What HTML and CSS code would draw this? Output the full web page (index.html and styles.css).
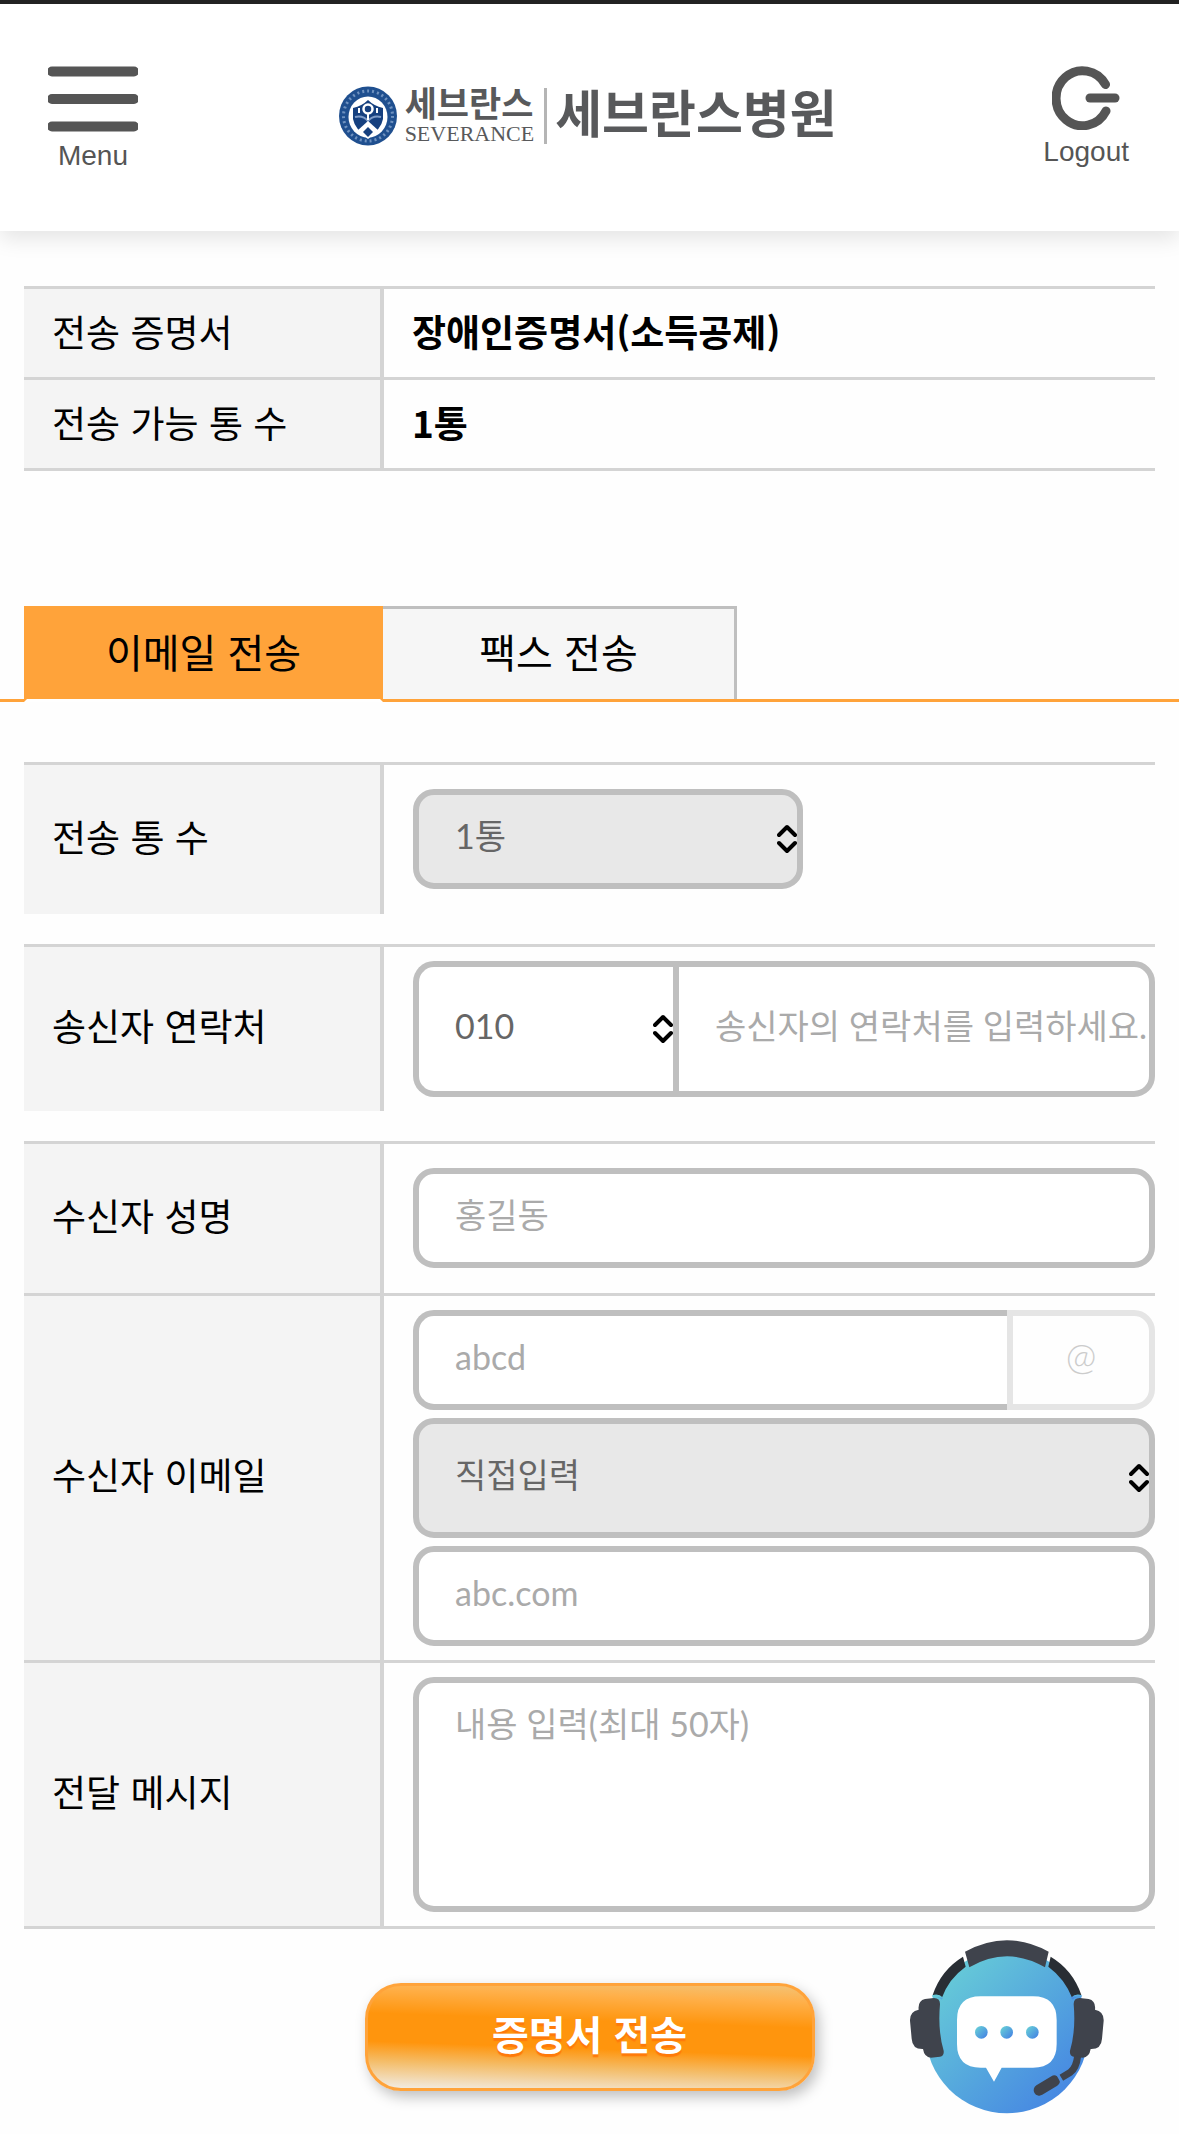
FILE: index.html
```html
<!DOCTYPE html>
<html lang="ko">
  <head>
    <meta charset="utf-8">
    <title>세브란스병원 증명서 전송</title>
    <meta name="viewport" content="width=device-width, initial-scale=1">
    <link rel="stylesheet" href="styles.css">
  </head>
  <body>
    <header class="header">
      <button type="button" class="header-btn">
        <svg width="90" height="66" viewBox="0 0 90 66">
          <path d="M4 5.5H86M4 33H86M4 60.5H86" stroke="#555" stroke-width="10" stroke-linecap="round"/>
        </svg>
        <span>Menu</span>
      </button>

      <a href="#" class="logo">
        <svg class="emblem" width="58" height="60" viewBox="0 0 58 60">
          <ellipse cx="29" cy="30" rx="29" ry="29.5" fill="#1f4f8f"/>
          <ellipse cx="29" cy="30" rx="24.5" ry="25" fill="none" stroke="#6f92c0" stroke-width="3" stroke-dasharray="2 3"/>
          <ellipse cx="29" cy="31" rx="19.5" ry="20.5" fill="#fff"/>
          <path d="M14 22Q23 20 29 14Q35 20 44 22V33Q42 44 29 51Q16 44 14 33Z" fill="#16407f"/>
          <path d="M16 31Q24 29 29 35Q34 29 42 31" fill="none" stroke="#7f9cc8" stroke-width="2"/>
          <path d="M18 45L29 35L40 45L29 53Z" fill="#fff"/>
          <path d="M29 41L34 46L29 51L24 46Z" fill="#16407f"/>
          <circle cx="29" cy="23" r="4.5" fill="#16407f" stroke="#fff" stroke-width="2.5"/>
          <path d="M29 28V34M20 22V27M38 22V27" stroke="#fff" stroke-width="2"/>
        </svg>
        <span class="logo-brand">
          <span class="logo-ko">세브란스</span>
          <span class="logo-en">SEVERANCE</span>
        </span>
        <span class="logo-name">세브란스병원</span>
      </a>

      <button type="button" class="header-btn logout">
        <svg width="68" height="64" viewBox="0 0 68 64">
          <path d="M53.5 18.5A26.5 27.5 0 1 0 54 45" fill="none" stroke="#555" stroke-width="9" stroke-linecap="round"/>
          <path d="M38 32H63" stroke="#555" stroke-width="9" stroke-linecap="round"/>
        </svg>
        <span>Logout</span>
      </button>
    </header>

    <table class="info">
      <tr>
        <th>전송 증명서</th>
        <td>장애인증명서(소득공제)</td>
      </tr>
      <tr>
        <th>전송 가능 통 수</th>
        <td>1통</td>
      </tr>
    </table>

    <nav class="tabs">
      <a href="#" class="tab active">이메일 전송</a>
      <a href="#" class="tab">팩스 전송</a>
    </nav>

    <form class="form">
      <div class="row spaced">
        <label for="copies">전송 통 수</label>
        <div class="fields tall">
          <select id="copies" class="field short" disabled>
            <option>1통</option>
          </select>
        </div>
      </div>

      <div class="row spaced">
        <label for="phone">송신자 연락처</label>
        <div class="fields joined">
          <select class="field phone-code" aria-label="국번">
            <option>010</option>
            <option>011</option>
            <option>016</option>
          </select>
          <input id="phone" class="field phone-number" type="tel" placeholder="송신자의 연락처를 입력하세요.">
        </div>
      </div>

      <div class="row">
        <label for="receiver">수신자 성명</label>
        <div class="fields tall">
          <input id="receiver" class="field" type="text" placeholder="홍길동">
        </div>
      </div>

      <div class="row">
        <label for="email">수신자 이메일</label>
        <div class="fields">
          <div class="joined">
            <input id="email" class="field email-id" type="text" placeholder="abcd">
            <span class="at">@</span>
          </div>
          <select class="field domain" aria-label="이메일 도메인" disabled>
            <option>직접입력</option>
          </select>
          <input class="field" type="text" aria-label="도메인 입력" placeholder="abc.com">
        </div>
      </div>

      <div class="row last">
        <label for="message">전달 메시지</label>
        <div class="fields">
          <textarea id="message" class="field" maxlength="50" placeholder="내용 입력(최대 50자)"></textarea>
        </div>
      </div>

      <button type="submit" class="submit">증명서 전송</button>
    </form>

    <a href="#" class="chatbot" aria-label="상담">
      <svg width="195" height="175" viewBox="88 85 585 525">
        <defs>
          <linearGradient id="chat" x1="0.15" y1="0.15" x2="0.85" y2="0.85">
            <stop offset="0" stop-color="#65c9d8"/>
            <stop offset="1" stop-color="#4789e2"/>
          </linearGradient>
        </defs>
        <circle cx="382" cy="363" r="245" fill="url(#chat)"/>
        <!-- headband -->
        <path d="M244 130L254 146L264 142L262 120ZM520 130L510 146L500 142L502 120Z" fill="#fff"/>
        <path d="M256 123Q382 54 507 123L496 170Q382 104 269 170Z" fill="#3f434c"/>
        <path d="M250 138Q184 178 159 253L186 263Q206 205 258 168ZM513 138Q580 178 605 253L578 263Q556 205 506 168Z" fill="#292e34"/>
        <path d="M158 258Q174 250 188 264M576 264Q590 250 606 258" fill="none" stroke="url(#chat)" stroke-width="7"/>
        <!-- ear cups -->
        <path id="cup" d="M136 265L163 262Q181 262 181 280Q174 360 192 420Q194 436 181 438L154 441Q134 440 130 415Q98 416 96 384L91 330Q90 302 117 297Q114 270 136 265Z" fill="#3f434c"/>
        <use href="#cup" transform="translate(763 0) scale(-1 1)"/>
        <!-- microphone -->
        <path d="M594 436Q590 471 572 485L545 501" fill="none" stroke="#3f434c" stroke-width="21"/>
        <path d="M479 538L524 511" stroke="#3f434c" stroke-width="34" stroke-linecap="round"/>
        <path d="M532 489L549 520" stroke="#4b8de1" stroke-width="7"/>
        <!-- speech bubble -->
        <path d="M303 257H460Q531 257 531 328V400Q531 471 460 471H366L343 513L319 471H303Q232 471 232 400V328Q232 257 303 257Z" fill="#fff"/>
        <circle cx="305" cy="365" r="19" fill="url(#chat)"/>
        <circle cx="381" cy="365" r="19" fill="url(#chat)"/>
        <circle cx="458" cy="365" r="19" fill="url(#chat)"/>
      </svg>
    </a>
  </body>
</html>
```
FILE: styles.css
```css
* {
    box-sizing: border-box;
}

body {
    position: relative;
    margin: 0;
    border-top: 4px solid #222;
    background-color: #fefefe;
    color: #000;
    font-family: "Noto Sans CJK KR", sans-serif;
    font-size: 37px;
}

a {
    color: inherit;
    text-decoration: none;
}

/* header */
.header {
    display: flex;
    justify-content: space-between;
    align-items: flex-start;
    padding: 62px 50px 57px 48px;
    background-color: #fff;
    box-shadow: 0 8px 20px rgba(0, 0, 0, 0.1);
}

.header-btn {
    display: flex;
    flex-direction: column;
    align-items: center;
    gap: 6px;
    padding: 0;
    border: 0;
    background: none;
    color: #555;
    font-family: "Liberation Sans", Arial, sans-serif;
    font-size: 28px;
    line-height: 36px;
}

.header-btn.logout {
    gap: 4px;
}

.logo {
    display: flex;
    align-items: center;
    margin: 20px 6px 0 0;
    color: #58595b;
    font-family: "Liberation Sans", "Noto Sans CJK KR", sans-serif;
    font-weight: bold;
}

.logo-brand {
    display: flex;
    flex-direction: column;
    margin: 0 10px 0 8px;
}

.logo-ko {
    font-size: 35px;
    line-height: 36px;
}

.logo-en {
    font-family: "Liberation Serif", serif;
    font-size: 22px;
    font-weight: normal;
    line-height: 22px;
}

.logo-name {
    padding-left: 8px;
    border-left: 3px solid #b5b5b5;
    font-size: 51px;
    line-height: 56px;
}

/* certificate info */
.info {
    width: calc(100% - 48px);
    margin: 55px 24px 0;
    border-collapse: collapse;
    line-height: 48px;
    text-align: left;
}

.info tr {
    height: 91px;
    border-top: 3px solid #d4d4d4;
    border-bottom: 3px solid #d4d4d4;
}

.info th {
    width: 358px;
    padding: 0 28px 4px;
    border-right: 4px solid #d4d4d4;
    background-color: #f4f4f4;
    font-weight: normal;
}

.info td {
    padding: 0 28px 4px;
    font-weight: bold;
}

/* tabs */
.tabs {
    display: flex;
    margin-top: 135px;
    padding-left: 24px;
    border-bottom: 3px solid #ffa33a;
}

.tab {
    width: 354px;
    height: 93px;
    border-top: 3px solid #bfbfbf;
    border-right: 3px solid #bfbfbf;
    background-color: #f6f6f6;
    font-size: 40px;
    line-height: 84px;
    text-align: center;
}

.tab.active {
    width: 359px;
    height: 96px;
    margin-bottom: -3px;
    border: 3px solid #ffa33a;
    border-bottom-color: #fff;
    background-color: #ffa33a;
}

/* form */
.form {
    padding: 60px 24px 43px;
}

.row {
    display: grid;
    grid-template-columns: 360px 1fr;
    column-gap: 29px;
    border-top: 3px solid #d4d4d4;
}

.row.spaced {
    margin-bottom: 30px;
}

.row.last {
    border-bottom: 3px solid #d4d4d4;
}

.row label {
    display: flex;
    align-items: center;
    padding: 0 28px 8px;
    border-right: 4px solid #d4d4d4;
    background-color: #f4f4f4;
}

.fields {
    display: flex;
    flex-direction: column;
    gap: 8px;
    min-width: 0;
    padding: 14px 0;
}

.fields.tall {
    padding: 24px 0 25px;
}

.joined,
.fields.joined {
    display: flex;
    flex-direction: row;
    gap: 0;
}

.field {
    width: 100%;
    min-width: 0;
    height: 100px;
    margin: 0;
    padding: 0 0 8px 36px;
    border: 6px solid #bfbfbf;
    border-radius: 21px;
    background-color: #fff;
    color: #666;
    font-family: Lato, "Noto Sans CJK KR", sans-serif;
    font-size: 34px;
}

.field::placeholder {
    color: #aaa;
    opacity: 1;
}

select.field {
    appearance: none;
    background-image: url("data:image/svg+xml,%3Csvg xmlns='http://www.w3.org/2000/svg' width='20' height='30'%3E%3Cpath d='M2 11L10 3L18 11M2 19L10 27L18 19' fill='none' stroke='black' stroke-width='4' stroke-linecap='round' stroke-linejoin='round'/%3E%3C/svg%3E");
    background-repeat: no-repeat;
    background-position: right center;
}

select.field:disabled {
    background-color: #e8e8e8;
    opacity: 1;
}

.field.short {
    width: 390px;
}

.field.phone-code {
    width: 260px;
    flex: none;
    height: 136px;
    border-right: 0;
    border-radius: 21px 0 0 21px;
}

.field.phone-number {
    height: 136px;
    border-radius: 0 21px 21px 0;
}

.field.email-id {
    border-right: 0;
    border-radius: 21px 0 0 21px;
}

.at {
    flex: none;
    width: 148px;
    border: 6px solid #e5e5e5;
    border-radius: 0 21px 21px 0;
    color: #ccc;
    font-family: Lato, sans-serif;
    font-size: 37px;
    font-weight: 300;
    line-height: 80px;
    text-align: center;
}

.field.domain {
    height: 120px;
}

textarea.field {
    height: 235px;
    padding-top: 21px;
    line-height: 40px;
    resize: none;
}

.submit {
    display: block;
    width: 450px;
    height: 108px;
    margin: 54px auto 0;
    padding: 0 0 8px;
    border: 3px solid #ffa33a;
    border-radius: 36px;
    background: linear-gradient(182deg, #f3c274 0%, #ffb04a 14%, #ff950d 36%, #ff950d 60%, #f4bd69 77%, #f1ede6 100%);
    box-shadow: 4px 6px 14px rgba(0, 0, 0, 0.25);
    color: #fff;
    font-family: inherit;
    font-size: 40px;
    font-weight: bold;
    text-shadow: 0 3px 1px #ff7a0a;
}

.chatbot {
    position: absolute;
    right: 75px;
    bottom: 20px;
    line-height: 0;
}
```
